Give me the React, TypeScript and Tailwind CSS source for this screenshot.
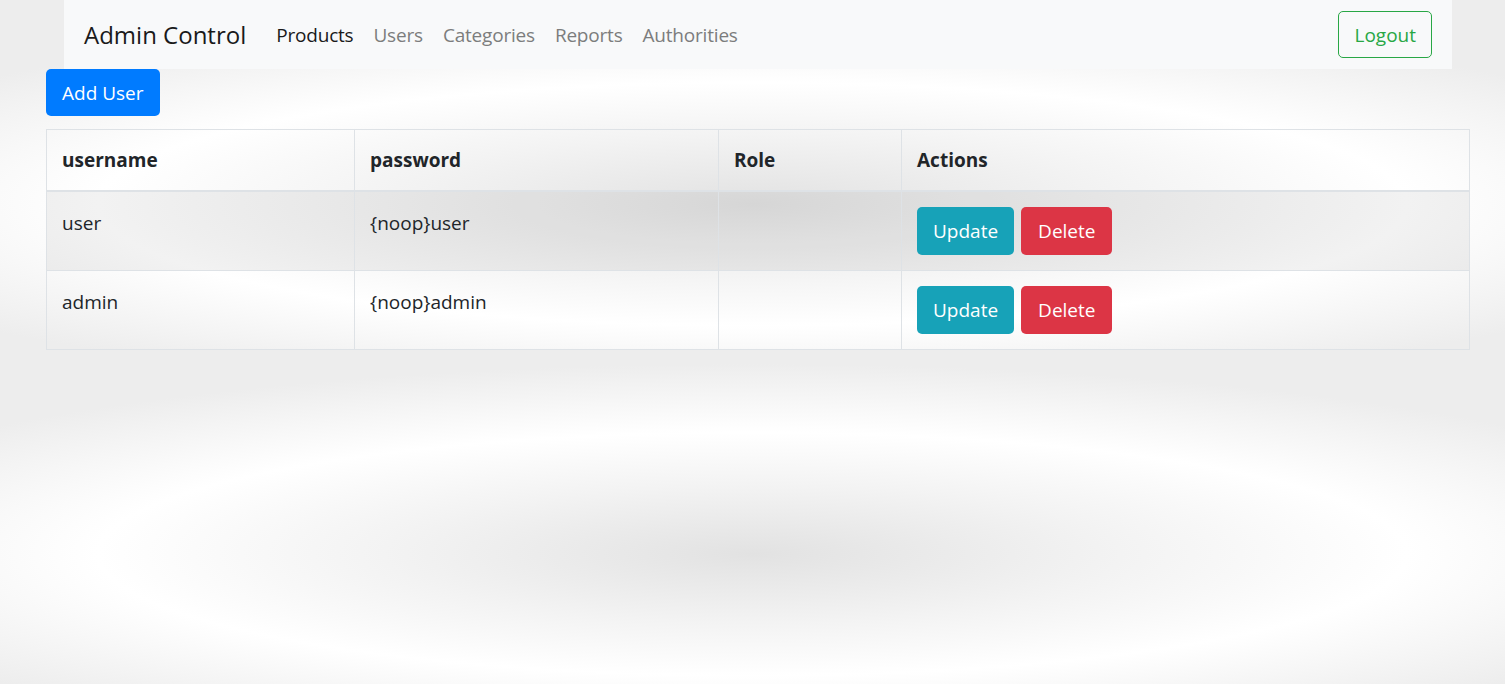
import React from "react";

const users = [
  { username: "user", password: "{noop}user", role: "" },
  { username: "admin", password: "{noop}admin", role: "" },
];

const App = () => {
  return (
    <div
      className="min-h-[684px] w-full text-[19px] leading-[30px] text-[#212529] bg-[radial-gradient(ellipse_818px_152px_at_50%_204px,#e2e2e2_0%,#f3f3f3_45%,#ffffff_80%,#ededed_125%)] bg-[length:100%_350px] bg-repeat-y"
      style={{ fontFamily: '"Open Sans", "Liberation Sans", sans-serif' }}
    >
      {/* Navbar */}
      <nav className="ml-[64px] w-[1388px] h-[69px] bg-[#f8f9fa] flex items-center px-[20px]">
        <span className="text-[24px] leading-[38px] text-[#1a1a1a] mr-[20px]">Admin Control</span>
        <ul className="flex items-center tracking-[-0.2px]">
          <li><a href="#" className="px-[10px] text-[#1a1a1a]">Products</a></li>
          <li><a href="#" className="px-[10px] text-[#7c7d7d]">Users</a></li>
          <li><a href="#" className="px-[10px] text-[#7c7d7d]">Categories</a></li>
          <li><a href="#" className="px-[10px] text-[#7c7d7d]">Reports</a></li>
          <li><a href="#" className="px-[10px] text-[#7c7d7d]">Authorities</a></li>
        </ul>
        <button className="ml-auto h-[47px] px-[15px] border border-[#28a745] rounded-[5px] text-[#28a745]">
          Logout
        </button>
      </nav>

      <div className="ml-[46px] w-[1424px]">
        <button className="h-[47px] px-[16px] bg-[#007bff] text-white rounded-[5px]">Add User</button>

        {/* Users table */}
        <table className="mt-[13px] w-full border-collapse border border-[#dee2e6]">
          <thead>
            <tr className="border-b-2 border-[#dee2e6]">
              <th className="w-[308px] h-[61px] px-[15px] text-left font-bold border border-[#dee2e6]">username</th>
              <th className="w-[364px] px-[15px] text-left font-bold border border-[#dee2e6]">password</th>
              <th className="w-[183px] px-[15px] text-left font-bold border border-[#dee2e6]">Role</th>
              <th className="px-[15px] text-left font-bold border border-[#dee2e6]">Actions</th>
            </tr>
          </thead>
          <tbody>
            {users.map((u, i) => (
              <tr key={u.username} className={i % 2 === 0 ? "bg-black/5" : ""}>
                <td className="align-top pt-[16px] px-[15px] pb-[15px] border border-[#dee2e6]">{u.username}</td>
                <td className="align-top pt-[16px] px-[15px] pb-[15px] border border-[#dee2e6]">{u.password}</td>
                <td className="align-top pt-[16px] px-[15px] pb-[15px] border border-[#dee2e6]">{u.role}</td>
                <td className="align-top p-[15px] border border-[#dee2e6]">
                  <div className="flex gap-[7px]">
                    <button className="h-[48px] px-[16px] bg-[#17a2b8] text-white rounded-[5px]">Update</button>
                    <button className="h-[48px] px-[17px] bg-[#dc3545] text-white rounded-[5px]">Delete</button>
                  </div>
                </td>
              </tr>
            ))}
          </tbody>
        </table>
      </div>
    </div>
  );
};

export default App;
